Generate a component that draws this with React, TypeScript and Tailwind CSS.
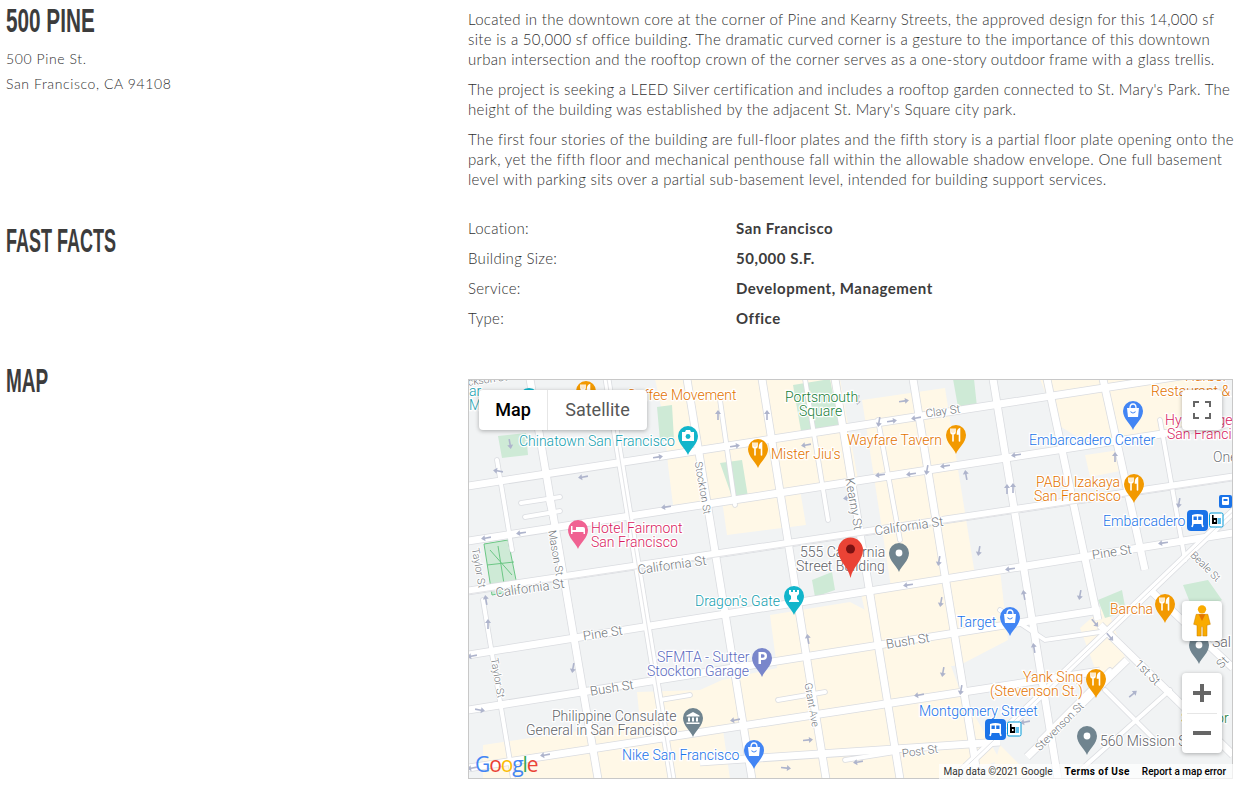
const facts = [
  ['Location:', 'San Francisco'],
  ['Building Size:', '50,000 S.F.'],
  ['Service:', 'Development, Management'],
  ['Type:', 'Office'],
]

// map data uses page coordinates, the svg viewBox starts at the map's corner
const majorRoads = [
  'M468 486 L1233 368',
  'M468 541 L1233 423',
  'M468 591 L1233 477',
  'M468 655 L1233 533',
  'M468 710 L1100 610',
  'M468 768 L1100 671',
  'M700 762 L1000 742',
  'M530 379 L598 779',
  'M607 379 L672 779',
  'M687 379 L752 779',
  'M762 379 L826 779',
  'M835 379 L900 779',
  'M913 379 L978 779',
  'M993 379 L1058 779',
  'M1047 379 L1098 620',
  'M1103 379 L1145 570',
  'M1240 505 L950 782',
  'M1127 660 L1027 757',
  'M1100 625 L1233 755',
  'M1150 590 L1233 668',
]
const minorRoads = [
  'M497 460 L512 550',
  'M483 600 L513 779',
  'M720 400 L735 505',
  'M805 379 L828 520',
  'M878 420 L900 540',
  'M1160 420 L1185 560',
  'M548 500 L555 530',
  'M521 503 L560 497',
  'M525 517 L560 511',
  'M1040 740 L1110 670',
  'M1075 775 L1170 690',
  'M660 700 L690 695',
  'M1000 610 L1045 640 L1100 632',
  'M1105 690 L1160 745',
  'M845 760 L895 752',
  'M778 700 L825 692',
]
const beige = [
  'M655 379 L840 379 L858 480 L800 490 L806 525 L727 535 L722 500 L673 505 L668 465 L664 420 Z',
  'M862 400 L945 388 L975 575 L893 600 Z',
  'M1040 379 L1210 379 L1205 430 L1090 445 L1058 425 Z',
  'M1085 455 L1120 450 L1125 470 L1090 477 Z',
  'M770 615 L850 602 L875 615 L880 660 L945 650 L960 690 L1000 760 L950 779 L483 779 L483 745 L640 722 L637 692 L700 690 L722 680 L777 668 Z',
  'M860 590 L1000 570 L1008 640 L960 665 L880 675 Z',
  'M1080 628 L1106 605 L1126 660 L1100 682 Z',
  'M1000 745 L1030 775 L990 779 Z',
]
const grayPatches = [
  'M723 730 L743 727 L752 779 L730 779 Z',
  'M830 500 L855 497 L860 520 L835 525 Z',
]
const arrows: [number, number, number][] = [
  [498, 471, 190], [510, 444, 80], [583, 477, 170], [520, 422, 90], [658, 457, -8], [666, 507, 172],
  [486, 538, 170], [521, 533, 172], [718, 415, -90], [767, 415, -90], [735, 446, -8], [806, 445, 170],
  [848, 498, 172], [858, 400, 100], [904, 401, -8], [879, 422, 100], [892, 421, -8], [916, 418, 170],
  [880, 475, 172], [911, 474, 172], [927, 470, 100], [945, 466, 172], [966, 475, -100], [1016, 455, 172],
  [1007, 489, -90], [1013, 488, -90], [1115, 457, -90], [1179, 503, 100], [979, 551, 100], [939, 561, 100],
  [1010, 569, 172], [1163, 543, 172], [486, 600, -100], [488, 624, -90], [472, 656, 170], [573, 668, 100],
  [480, 710, 10], [808, 639, -100], [941, 602, 100], [908, 585, 172], [1024, 595, -100], [1080, 595, 100],
  [1034, 648, -100], [943, 672, 100], [919, 695, 170], [961, 690, 100], [1133, 694, -40], [1095, 623, 50],
  [1110, 637, 50], [545, 755, 170], [472, 768, 170], [735, 720, 170], [808, 740, -5], [786, 768, 5],
  [858, 762, 170], [1025, 722, 170],
]

type Icon = 'food' | 'shop' | 'camera' | 'dot' | 'castle' | 'bank' | 'p' | 'bed'
const pins: [number, number, string, Icon][] = [
  [529, 398, '#12b5cb', 'camera'],
  [586, 391, '#f29900', 'food'],
  [688, 436, '#12b5cb', 'camera'],
  [758, 449, '#f29900', 'food'],
  [578, 530, '#f06292', 'bed'],
  [956, 435, '#f29900', 'food'],
  [1133, 411, '#4285f4', 'shop'],
  [1134, 484, '#f29900', 'food'],
  [899, 553, '#70848f', 'dot'],
  [794, 596, '#12b5cb', 'castle'],
  [762, 658, '#7986cb', 'p'],
  [693, 718, '#70848f', 'bank'],
  [754, 750, '#4285f4', 'shop'],
  [1010, 617, '#4285f4', 'shop'],
  [1165, 604, '#f29900', 'food'],
  [1096, 679, '#f29900', 'food'],
  [1087, 736, '#70848f', 'dot'],
  [1199, 645, '#70848f', 'dot'],
]

const labels: [string, number, number, string][] = [
  ['ar', 469, 396, '#129eaf'],
  ['Mu', 469, 410, '#129eaf'],
  ['Chinatown San Francisco', 519, 446, '#129eaf'],
  ['Coffee Movement', 627, 400, '#e37400'],
  ['Portsmouth', 785, 402, '#188038'],
  ['Square', 799, 416, '#188038'],
  ['Mister Jiu\'s', 771, 459, '#e37400'],
  ['Wayfare Tavern', 847, 445, '#e37400'],
  ['Embarcadero Center', 1029, 445, '#1a73e8'],
  ['Restaurant &', 1151, 396, '#e37400'],
  ['Harbor V', 1185, 381, '#e37400'],
  ['Hyatt Regency', 1165, 425, '#d81b60'],
  ['San Francisco', 1167, 439, '#d81b60'],
  ['One', 1213, 462, '#70757a'],
  ['PABU Izakaya', 1036, 487, '#e37400'],
  ['San Francisco', 1034, 501, '#e37400'],
  ['Embarcadero', 1103, 526, '#1a73e8'],
  ['Hotel Fairmont', 591, 533, '#d81b60'],
  ['San Francisco', 591, 547, '#d81b60'],
  ['555 California', 800, 557, '#5f6368'],
  ['Street Building', 796, 571, '#5f6368'],
  ['Dragon\'s Gate', 695, 606, '#129eaf'],
  ['Target', 957, 627, '#1a73e8'],
  ['Barcha', 1110, 614, '#e37400'],
  ['SFMTA - Sutter', 657, 662, '#5c6bc0'],
  ['Stockton Garage', 647, 676, '#5c6bc0'],
  ['Philippine Consulate', 552, 721, '#5f6368'],
  ['General in San Francisco', 526, 735, '#5f6368'],
  ['Nike San Francisco', 622, 760, '#1a73e8'],
  ['Yank Sing', 1023, 682, '#e37400'],
  ['(Stevenson St.)', 990, 696, '#e37400'],
  ['Montgomery Street', 919, 716, '#1a73e8'],
  ['560 Mission St', 1100, 746, '#5f6368'],
  ['Sal', 1212, 647, '#5f6368'],
  ['Senator', 1181, 723, '#188038'],
]

const streets: [string, number, number, number, number][] = [
  ['Jackson St', 482, 381, -8, 10.5],
  ['Clay St', 943, 412, -8, 11.5],
  ['California St', 672, 566, -8, 13],
  ['California St', 909, 527, -8, 13],
  ['California St', 530, 589, -8, 13],
  ['Pine St', 1112, 553, -9, 13],
  ['Pine St', 603, 634, -9, 13],
  ['Bush St', 908, 642, -9, 13],
  ['Bush St', 612, 689, -9, 13],
  ['Post St', 920, 752, -8, 11.5],
  ['Stockton St', 702, 488, 80, 10.5],
  ['Kearny St', 853, 504, 80, 12.5],
  ['Mason St', 555, 553, 80, 11],
  ['Taylor St', 478, 568, 80, 10.5],
  ['Taylor St', 497, 678, 80, 10.5],
  ['Grant Ave', 811, 705, 80, 10.5],
  ['Beale St', 1205, 567, 45, 10.5],
  ['1st St', 1147, 673, 45, 12],
  ['Stevenson St', 1060, 727, -45, 11],
  ['St', 1223, 663, -45, 12],
]

function PinGlyph({ icon }: { icon: Icon }) {
  if (icon === 'food') {
    return (
      <g fill="none" stroke="#fff" strokeWidth="1.6" strokeLinecap="round">
        <path d="M-3 -6 V-1 M-5 -6 V-3 Q-5 -1 -3 -1 Q-1 -1 -1 -3 V-6 M-3 -1 V6" />
        <path d="M3.5 6 V-6 Q1.5 -5 1.5 -1 H3.5" fill="#fff" />
      </g>
    )
  }
  if (icon === 'shop') {
    return (
      <g>
        <path d="M-6 -3 H6 L5 6 H-5 Z" fill="#fff" />
        <path d="M-3 -3 Q-3 -7 0 -7 Q3 -7 3 -3" fill="none" stroke="#fff" strokeWidth="1.3" />
        <path d="M-2.5 0.5 Q0 3.5 2.5 0.5" fill="none" stroke="#4285f4" strokeWidth="1.1" />
      </g>
    )
  }
  if (icon === 'camera') {
    return (
      <g>
        <path d="M-6 -4 H-3 L-2 -6 H2 L3 -4 H6 V5 H-6 Z" fill="#fff" />
        <circle cx="0" cy="0.5" r="2.4" fill="#12b5cb" />
      </g>
    )
  }
  if (icon === 'dot') return <circle cx="0" cy="0" r="3.4" fill="#fff" />
  if (icon === 'castle') {
    return <path d="M-5 -6 H-3 V-4 H-1 V-6 H1 V-4 H3 V-6 H5 V-2 L3 0 V3 L5 5 V6 H-5 V5 L-3 3 V0 L-5 -2 Z" fill="#fff" />
  }
  if (icon === 'bank') {
    return <path d="M0 -6 L6.5 -2.5 V-1.5 H-6.5 V-2.5 Z M-5 -0.5 H-3 V3.5 H-5 Z M-1 -0.5 H1 V3.5 H-1 Z M3 -0.5 H5 V3.5 H3 Z M-6.5 4.5 H6.5 V6 H-6.5 Z" fill="#fff" />
  }
  if (icon === 'p') {
    return <path fillRule="evenodd" d="M-3.5 -6 H1 Q5 -6 5 -2 Q5 2 1 2 H-1 V6 H-3.5 Z M-1 -3.8 V-0.2 H1 Q2.6 -0.2 2.6 -2 Q2.6 -3.8 1 -3.8 Z" fill="#fff" />
  }
  return <path d="M-7 -4 H-5.5 V0 H-2 V-3 H5 Q7 -3 7 -1 V4 H5.5 V2 H-5.5 V4 H-7 Z" fill="#fff" />
}

function Transit({ x, y }: { x: number; y: number }) {
  return (
    <g transform={`translate(${x} ${y})`}>
      <rect x="0" y="0" width="21" height="21" rx="4" fill="#1a73e8" />
      <path d="M5 5 Q10.5 3 16 5 V14 H5 Z" fill="#fff" />
      <rect x="6.5" y="6.5" width="3.3" height="3.5" fill="#1a73e8" />
      <rect x="11.2" y="6.5" width="3.3" height="3.5" fill="#1a73e8" />
      <path d="M6 14 L5 17 M15 14 L16 17" stroke="#fff" strokeWidth="1.6" />
      <rect x="22.5" y="3" width="13.5" height="14" rx="1.5" fill="#fff" stroke="#0099d8" />
      <rect x="25" y="8" width="5" height="6" fill="#000" />
      <rect x="25" y="5" width="1.6" height="4" fill="#000" />
      <rect x="27" y="10" width="1.6" height="2" fill="#fff" />
      <rect x="30.5" y="8" width="3.5" height="6" fill="#5fc0ec" />
    </g>
  )
}

function MapCanvas() {
  return (
    <svg viewBox="468 379 765 400" className="block h-full w-full [font-family:'Roboto',sans-serif]">
      <rect x="468" y="379" width="765" height="400" fill="#f1f3f4" />
      {beige.map((d) => <path key={d} d={d} fill="#fff8e7" />)}
      {grayPatches.map((d) => <path key={d} d={d} fill="#f1f3f4" />)}
      <path d="M793 385 L830 379 L840 430 L802 437 Z" fill="#ceead6" />
      <path d="M953 379 L974 379 L977 407 L958 407 Z M657 407 L672 405 L674 440 L660 441 Z M720 463 L742 460 L748 497 L732 497 Z M498 436 L526 433 L528 455 L502 458 Z M812 580 L832 572 L835 590 L815 597 Z M1098 600 L1122 590 L1126 612 L1105 618 Z M1183 585 L1208 580 L1222 600 L1195 615 Z" fill="#ceead6" />
      <path d="M484 544 L508 540 L518 590 L492 595 Z" fill="#ceead6" stroke="#6cc785" strokeWidth="1" />
      <path d="M490 550 L512 575 M498 546 L505 590 M487 565 L514 562" stroke="#6cc785" strokeWidth="1" fill="none" />
      <g fill="none" strokeLinecap="butt">
        {minorRoads.map((d) => <path key={d} d={d} stroke="#dadce0" strokeWidth="5.5" strokeLinecap="round" />)}
        {majorRoads.map((d) => <path key={d} d={d} stroke="#dadce0" strokeWidth="8.5" />)}
        {minorRoads.map((d) => <path key={d} d={d} stroke="#fff" strokeWidth="4" strokeLinecap="round" />)}
        {majorRoads.map((d) => <path key={d} d={d} stroke="#fff" strokeWidth="7" />)}
        <path d="M468 594 L1233 480 M607 379 L672 779 M1240 505 L950 782" stroke="#dadce0" strokeWidth="0.8" />
      </g>
      {arrows.map(([x, y, a]) => (
        <path
          key={`${x}-${y}`}
          transform={`translate(${x} ${y}) rotate(${a})`}
          d="M-5 -0.8 H1 V-3 L5 0 L1 3 V0.8 H-5 Z"
          fill="#aeb4cc"
        />
      ))}
      {streets.map(([t, x, y, a, size]) => (
        <text
          key={`${t}-${x}`}
          transform={`translate(${x} ${y}) rotate(${a})`}
          textAnchor="middle"
          dominantBaseline="middle"
          fontSize={size}
          fill="#70757a"
          stroke="#fff"
          strokeWidth="2"
          className="[paint-order:stroke]"
        >
          {t}
        </text>
      ))}
      {labels.map(([t, x, y, c]) => (
        <text key={`${t}-${y}`} x={x} y={y} fontSize="14" fill={c} stroke="#fff" strokeWidth="2.5" className="[paint-order:stroke]">
          {t}
        </text>
      ))}
      {pins.map(([x, y, c, icon]) => (
        <g key={`${x}-${y}`} transform={`translate(${x} ${y})`}>
          <path d="M0 19 C-2 13 -10 8 -10 0 A10 10 0 0 1 10 0 C10 8 2 13 0 19 Z" fill={c} />
          <PinGlyph icon={icon} />
        </g>
      ))}
      <Transit x={1187} y={510} />
      <Transit x={985} y={719} />
      <rect x="1219" y="495" width="13" height="13" rx="2" fill="#1a73e8" />
      <rect x="1222" y="497" width="7" height="8" rx="1" fill="#fff" />
      <rect x="1223.5" y="499" width="4" height="2" fill="#1a73e8" />
      {/* red marker */}
      <path d="M850.5 578 C848 566 838 561 838 550 A12.5 12.5 0 0 1 863 550 C863 561 853 566 850.5 578 Z" fill="#ea4335" />
      <circle cx="850.5" cy="549" r="4.5" fill="#7a1212" />
    </svg>
  )
}

function Pegman() {
  return (
    <svg viewBox="0 0 24 40" className="h-[34px] w-[20px]">
      <circle cx="12" cy="6" r="5" fill="#f9ab00" />
      <path d="M5 12 H19 L22 24 L18 25 V38 H13 V27 H11 V38 H6 V25 L2 24 Z" fill="#f9ab00" stroke="#c77f00" strokeWidth="0.6" />
      <path d="M8 12 L12 20 L16 12 Z" fill="#e37400" />
    </svg>
  )
}

export default function App() {
  return (
    <div className="min-h-[791px] w-[1254px] overflow-hidden bg-white pl-[6px] text-[15px] leading-5 font-light tracking-[0.3px] text-[#303030] [font-family:'Lato',sans-serif]">
      <section className="grid h-[189px] grid-cols-[462px_765px]">
        <div className="pt-[3px]">
          <h1 className="origin-left scale-x-[0.61] whitespace-nowrap text-[34px] leading-[34px] font-bold tracking-normal text-[#3c3c3c] [font-family:'Liberation_Sans',sans-serif]">500 PINE</h1>
          <p className="mt-[9px] text-[14px] leading-[25px] tracking-[0.6px]">500 Pine St.</p>
          <p className="text-[14px] leading-[25px] tracking-[0.6px]">San Francisco, CA 94108</p>
        </div>
        <div className="-mr-[2px] flex flex-col gap-[10px] pt-[9px]">
          <p>Located in the downtown core at the corner of Pine and Kearny Streets, the approved design for this 14,000 sf site is a 50,000 sf office building. The dramatic curved corner is a gesture to the importance of this downtown urban intersection and the rooftop crown of the corner serves as a one-story outdoor frame with a glass trellis.</p>
          <p>The project is seeking a LEED Silver certification and includes a rooftop garden connected to St. Mary's Park. The height of the building was established by the adjacent St. Mary's Square city park.</p>
          <p>The first four stories of the building are full-floor plates and the fifth story is a partial floor plate opening onto the park, yet the fifth floor and mechanical penthouse fall within the allowable shadow envelope. One full basement level with parking sits over a partial sub-basement level, intended for building support services.</p>
        </div>
      </section>

      <section className="mt-[24px] grid grid-cols-[462px_765px]">
        <h2 className="origin-left scale-x-[0.53] whitespace-nowrap pt-[10px] text-[34px] leading-[34px] font-bold tracking-normal text-[#3c3c3c] [font-family:'Liberation_Sans',sans-serif]">FAST FACTS</h2>
        <div>
          {facts.map(([k, v]) => (
            <div key={k} className="grid h-[30px] grid-cols-[268px_1fr] items-center">
              <span>{k}</span>
              <span className="font-bold tracking-[0.5px] text-[#3c3c3c]">{v}</span>
            </div>
          ))}
        </div>
      </section>

      <section className="mt-[30px] grid grid-cols-[462px_765px]">
        <h2 className="origin-left scale-x-[0.56] text-[34px] leading-[34px] font-bold tracking-normal text-[#3c3c3c] [font-family:'Liberation_Sans',sans-serif]">MAP</h2>
        <div className="pt-[16px]">
          <div className="relative h-[400px] overflow-hidden tracking-normal outline outline-1 -outline-offset-1 outline-[#c8c8c8]">
            <MapCanvas />
            <div className="absolute left-[11px] top-[11px] flex h-10 rounded-sm bg-white text-[18px] font-normal shadow-[0_1px_4px_rgba(0,0,0,0.3)] [font-family:'Roboto',sans-serif]">
              <span className="flex w-[69px] items-center justify-center border-r border-[#e6e6e6] font-medium text-black">Map</span>
              <span className="flex w-[99px] items-center justify-center text-[#565656]">Satellite</span>
            </div>
            <div className="absolute right-[11px] top-[11px] flex h-10 w-10 items-center justify-center rounded-sm bg-white shadow-[0_1px_4px_rgba(0,0,0,0.3)]">
              <svg viewBox="0 0 18 18" className="h-[18px] w-[18px]" fill="none" stroke="#666" strokeWidth="2">
                <path d="M1 6 V1 H6 M12 1 H17 V6 M17 12 V17 H12 M6 17 H1 V12" />
              </svg>
            </div>
            <div className="absolute right-[11px] top-[222px] flex h-10 w-10 items-center justify-center rounded-sm bg-white shadow-[0_1px_4px_rgba(0,0,0,0.3)]">
              <Pegman />
            </div>
            <div className="absolute right-[11px] top-[294px] flex h-20 w-10 flex-col items-center rounded-sm bg-white shadow-[0_1px_4px_rgba(0,0,0,0.3)]">
              <div className="flex h-10 w-full items-center justify-center">
                <svg viewBox="0 0 18 18" className="h-[18px] w-[18px]" fill="#666"><path d="M7 0 H11 V7 H18 V11 H11 V18 H7 V11 H0 V7 H7 Z" /></svg>
              </div>
              <div className="h-px w-[30px] bg-[#e6e6e6]" />
              <div className="flex h-10 w-full items-center justify-center">
                <svg viewBox="0 0 18 18" className="h-[18px] w-[18px]" fill="#666"><path d="M0 7 H18 V11 H0 Z" /></svg>
              </div>
            </div>
            <div className="absolute bottom-[3px] left-[7px] text-[21px] leading-[24px] font-medium tracking-[-1.1px] [font-family:'Open_Sans',sans-serif]">
              <span className="text-[#4285f4]">G</span>
              <span className="text-[#ea4335]">o</span>
              <span className="text-[#fbbc05]">o</span>
              <span className="text-[#4285f4]">g</span>
              <span className="text-[#34a853]">l</span>
              <span className="text-[#ea4335]">e</span>
            </div>
            <div className="absolute bottom-0 right-0 flex h-[15px] items-center gap-[12px] bg-white/70 pl-[5px] pr-[7px] text-[10px] leading-none font-normal text-black [font-family:'Roboto',sans-serif]">
              <span className="text-[#333]">Map data ©2021 Google</span>
              <span className="font-bold tracking-[0.45px]">Terms of Use</span>
              <span className="font-medium">Report a map error</span>
            </div>
          </div>
        </div>
      </section>
    </div>
  )
}
